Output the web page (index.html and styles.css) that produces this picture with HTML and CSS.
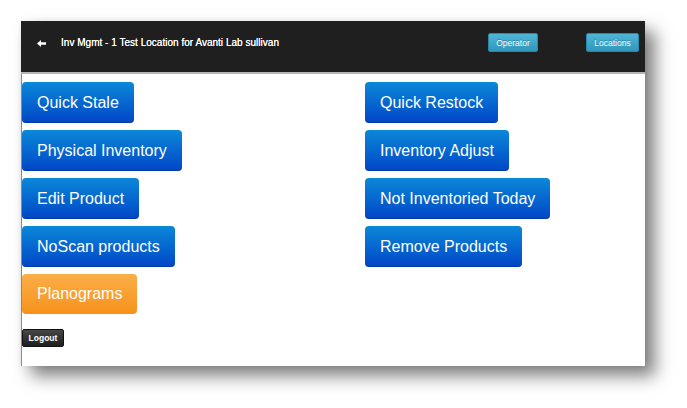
FILE: index.html
```html
<!DOCTYPE html>
<html>
<head>
<meta charset="utf-8">
<link rel="stylesheet" href="styles.css">
</head>
<body>
<div class="stage">
  <div class="window">
    <header class="topbar">
      <span class="back">
        <svg width="9" height="7" viewBox="0 0 9 7"><path d="M0 3.5 L4 0 V2.3 H9 V4.7 H4 V7 Z" fill="#fff"/></svg>
      </span>
      <span class="title">Inv Mgmt - 1 Test Location for Avanti Lab sullivan</span>
      <span class="spacer"></span>
      <button class="btn-info">Operator</button>
      <button class="btn-info loc">Locations</button>
    </header>
    <main class="content">
      <div class="grid">
        <button class="big blue">Quick Stale</button>
        <button class="big blue">Quick Restock</button>
        <button class="big blue">Physical Inventory</button>
        <button class="big blue">Inventory Adjust</button>
        <button class="big blue">Edit Product</button>
        <button class="big blue">Not Inventoried Today</button>
        <button class="big blue">NoScan products</button>
        <button class="big blue">Remove Products</button>
        <button class="big orange">Planograms</button>
      </div>
      <button class="logout">Logout</button>
    </main>
  </div>
</div>
</body>
</html>
```

FILE: styles.css
```css
html, body {
  margin: 0;
  padding: 0;
  background: #fff;
}
.stage {
  padding: 21px 0 42px 21px;
  height: 345px;
}
.window {
  width: 624px;
  height: 345px;
  background: #fff;
  display: flex;
  flex-direction: column;
  box-shadow: 10px 10px 16px rgba(0,0,0,0.5), 0 0 5px rgba(0,0,0,0.08);
  font-family: "Liberation Sans", Arial, sans-serif;
}
.topbar {
  background: #1f1f1f;
  border-bottom: 2px solid #b5b5b5;
  display: flex;
  align-items: flex-start;
  padding: 12px 6px 0 16px;
  box-sizing: content-box;
  height: 39px;
}
.back {
  display: flex;
  align-items: center;
  height: 20px;
  width: 9px;
  margin-right: 15px;
}
.back svg { display: block; }
.title {
  color: #fff;
  font-size: 10px;
  line-height: 20px;
  letter-spacing: 0.02px;
  text-shadow: 0 0 0.4px #fff;
}
.spacer { flex: 1; }
.btn-info {
  height: 19px;
  font-family: "Liberation Sans", Arial, sans-serif;
  font-size: 8.5px;
  color: #fff;
  text-shadow: 0 -1px 0 rgba(0,0,0,0.25);
  background: linear-gradient(#4fb6d8, #2f97bb);
  border: 1px solid #2a88a8;
  border-radius: 2px;
  padding: 0;
  box-sizing: border-box;
  width: 50px;
}
.btn-info.loc {
  width: 53px;
  margin-left: 48px;
}
.content {
  flex: 1;
  border-left: 1px solid #8a8a8a;
  padding: 8px 0 0 0;
}
.grid {
  display: grid;
  grid-template-columns: 343px 1fr;
  row-gap: 7px;
  justify-items: start;
}
.big {
  height: 41px;
  padding: 0 15px;
  font-family: "Liberation Sans", Arial, sans-serif;
  font-size: 16px;
  color: #fff;
  border-radius: 4px;
  border: none;
  cursor: pointer;
}
.blue {
  background: linear-gradient(#0b88d8, #0046c7);
  box-shadow: inset 0 -1px 0 rgba(0,0,60,0.2);
}
.orange {
  height: 40px;
  background: linear-gradient(#fbae48, #f7921b);
}
.logout {
  display: block;
  margin-top: 15px;
  width: 42px;
  height: 18px;
  padding: 0;
  font-family: "Liberation Sans", Arial, sans-serif;
  font-size: 8.5px;
  font-weight: bold;
  color: #fff;
  background: linear-gradient(#474747, #1f1f1f);
  border: 1px solid #111;
  border-radius: 2px;
}
```
